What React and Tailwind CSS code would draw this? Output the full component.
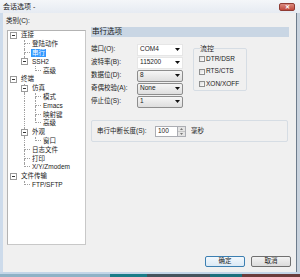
import React from 'react';

const treeRows = [
  { level: 0, label: '连接', open: true },
  { level: 1, label: '登陆动作' },
  { level: 1, label: '串行', selected: true },
  { level: 1, label: 'SSH2', open: true },
  { level: 2, label: '高级' },
  { level: 0, label: '终端', open: true },
  { level: 1, label: '仿真', open: true },
  { level: 2, label: '模式' },
  { level: 2, label: 'Emacs' },
  { level: 2, label: '映射键' },
  { level: 2, label: '高级' },
  { level: 1, label: '外观', open: true },
  { level: 2, label: '窗口' },
  { level: 1, label: '日志文件' },
  { level: 1, label: '打印' },
  { level: 1, label: 'X/Y/Zmodem' },
  { level: 0, label: '文件传输', open: true },
  { level: 1, label: 'FTP/SFTP' },
];

// does the row at index i have a later sibling on the same level?
const hasNextSibling = (i) => {
  const lvl = treeRows[i].level;
  for (let j = i + 1; j < treeRows.length; j++) {
    if (treeRows[j].level < lvl) return false;
    if (treeRows[j].level === lvl) return true;
  }
  return false;
};

// index of the ancestor at a given level
const ancestorAt = (i, lvl) => {
  for (let j = i - 1; j >= 0; j--) {
    if (treeRows[j].level === lvl) return j;
  }
  return -1;
};

const Expander = () => (
  <span className="w-[7px] h-[7px] border border-[#9a9a9a] bg-white flex items-center justify-center shrink-0">
    <span className="w-[3px] h-px bg-[#333]" />
  </span>
);

const TreeRow = ({ row, index }) => {
  const last = !hasNextSibling(index);
  const guides = [];
  for (let k = 1; k < row.level; k++) {
    const a = ancestorAt(index, k);
    guides.push(a >= 0 && hasNextSibling(a));
  }

  return (
    <div className="h-[8.8px] flex items-stretch">
      {row.level > 0 && <div className="w-[11px] shrink-0" />}
      {guides.map((g, k) => (
        <div key={k} className="w-[11px] shrink-0 flex justify-center">
          {g && <div className="w-0 border-l border-dotted border-[#a0a0a0]" />}
        </div>
      ))}
      {row.level === 0 ? (
        <div className="w-[11px] shrink-0 flex items-center justify-center">
          <Expander />
        </div>
      ) : row.open ? (
        <div className="w-[11px] shrink-0 flex flex-col items-center">
          <div className="flex-1 w-0 border-l border-dotted border-[#a0a0a0]" />
          <Expander />
          <div className={`flex-1 w-0 border-l border-dotted ${last ? 'border-transparent' : 'border-[#a0a0a0]'}`} />
        </div>
      ) : (
        <div className="w-[11px] shrink-0 flex flex-col">
          <div className="h-1/2 ml-[5px] border-l border-b border-dotted border-[#a0a0a0]" />
          <div className={`h-1/2 ml-[5px] border-l border-dotted ${last ? 'border-transparent' : 'border-[#a0a0a0]'}`} />
        </div>
      )}
      <div className="flex items-center pl-px">
        <span
          className={`px-px whitespace-nowrap leading-[8px] ${
            row.selected ? 'bg-[#3399ff] text-white' : ''
          }`}
        >
          {row.label}
        </span>
      </div>
    </div>
  );
};

const Arrow = () => (
  <svg width="5" height="3" viewBox="0 0 5 3" className="shrink-0">
    <polygon points="0,0 5,0 2.5,3" fill="#111" />
  </svg>
);

const Combo = ({ value, raised }) => (
  <div
    className={`w-[46px] h-[12px] flex items-center justify-between pl-[2px] pr-[2px] ${
      raised
        ? 'border border-[#8d8d8d] rounded-[2px] bg-gradient-to-b from-[#f6f6f6] to-[#dedede]'
        : 'border border-[#e6e6e6] bg-white'
    }`}
  >
    <span>{value}</span>
    <Arrow />
  </div>
);

const Check = ({ label }) => (
  <div className="h-[8px] flex items-center gap-px">
    <span className="w-[6px] h-[6px] border border-[#8e8f8f] bg-gradient-to-br from-[#dcdcdc] to-white" />
    <span className="whitespace-nowrap">{label}</span>
  </div>
);

const fields = [
  { label: '端口(O):', value: 'COM4' },
  { label: '波特率(B):', value: '115200' },
  { label: '数据位(D):', value: '8', raised: true },
  { label: '奇偶校验(A):', value: 'None', raised: true },
  { label: '停止位(S):', value: '1', raised: true },
];

export default function App() {
  return (
    <div className="w-[300px] h-[277px] flex flex-col overflow-hidden bg-[#dbe5f1] text-[6.5px] leading-none text-[#1b1b1b] font-['Liberation_Sans','Noto_Sans_CJK_SC',sans-serif]">
      {/* title bar */}
      <div className="h-[13px] shrink-0 flex items-center pl-[3px] pr-[5px] bg-gradient-to-b from-[#f4f6f9] to-[#e6ebf2]">
        <span className="text-[7px] text-[#222]">会话选项 -</span>
        <div className="flex-1" />
        <div className="w-[16px] h-[8px] rounded-[2px] border border-[#8f3b33] bg-gradient-to-b from-[#d98a7f] to-[#c0473b] flex items-center justify-center text-white text-[6px] font-bold">
          ✕
        </div>
      </div>

      {/* body */}
      <div className="flex-1 flex min-h-0">
        <div className="w-[3px] bg-[#cddbeb]" />
        <div className="flex-1 flex flex-col bg-[#f0f0f0]">
          <div className="flex-1 flex">
            {/* category tree */}
            <div className="pl-[3px] pt-[4px] flex flex-col">
              <div className="h-[9px] flex items-center">类别(C):</div>
              <div className="mt-[4px] ml-px w-[79px] h-[215px] bg-white border border-[#b3b3b3] border-r-[#c8c8c8] border-b-[#c8c8c8] flex flex-col">
                {treeRows.map((row, i) => (
                  <TreeRow key={i} row={row} index={i} />
                ))}
              </div>
            </div>

            {/* serial options */}
            <div className="ml-[5px] pt-[14px] w-[198px] flex flex-col">
              <div className="h-[10px] bg-[#c9d6e4] flex items-center pl-px text-[7.5px]">串行选项</div>

              <div className="mt-[6px] flex">
                <div className="flex flex-col">
                  {fields.map((f) => (
                    <div key={f.label} className="h-[13px] flex items-center">
                      <span className="w-[46px] whitespace-nowrap">{f.label}</span>
                      <Combo value={f.value} raised={f.raised} />
                    </div>
                  ))}
                </div>

                <fieldset className="ml-[10px] mt-[2px] w-[54px] h-[46px] border border-[#d6dde4] rounded-[2px] px-[5px] flex flex-col">
                  <legend className="ml-[1px] text-[7px] leading-[7px]">流控</legend>
                  <div className="mt-[3px] flex flex-col gap-[4.5px]">
                    <Check label="DTR/DSR" />
                    <Check label="RTS/CTS" />
                    <Check label="XON/XOFF" />
                  </div>
                </fieldset>
              </div>

              <div className="mt-[12px] w-[197px] h-[22px] border border-[#d6dde4] rounded-[2px] flex items-center pl-[5px]">
                <span className="w-[58px] whitespace-nowrap">串行中断长度(S):</span>
                <div className="w-[23px] h-[11px] bg-white border border-[#abadb3] flex items-center pl-[2px]">100</div>
                <div className="w-[8px] h-[11px] flex flex-col border border-l-0 border-[#abadb3]">
                  <div className="flex-1 bg-[#e4e4e4] flex items-center justify-center border-b border-[#c4c4c4]">
                    <svg width="3" height="2" viewBox="0 0 3 2"><polygon points="0,2 3,2 1.5,0" fill="#777" /></svg>
                  </div>
                  <div className="flex-1 bg-[#e4e4e4] flex items-center justify-center">
                    <svg width="3" height="2" viewBox="0 0 3 2"><polygon points="0,0 3,0 1.5,2" fill="#777" /></svg>
                  </div>
                </div>
                <span className="ml-[5px]">毫秒</span>
              </div>
            </div>
          </div>

          {/* dialog buttons */}
          <div className="flex justify-end gap-[6px] pr-[5px] pb-[5px]">
            <button className="w-[40px] h-[11px] rounded-[2px] border border-[#3c7fb1] bg-gradient-to-b from-[#f2f8fd] to-[#dbe9f5] flex items-center justify-center text-[6.5px] leading-none">
              确定
            </button>
            <button className="w-[40px] h-[11px] rounded-[2px] border border-[#707070] bg-gradient-to-b from-[#f3f3f3] to-[#dcdcdc] flex items-center justify-center text-[6.5px] leading-none">
              取消
            </button>
          </div>
        </div>
        <div className="w-px bg-[#6d7c8c]" />
        <div className="w-[3px] bg-[#c9d3de]" />
      </div>

      {/* bottom frame + taskbar sliver */}
      <div className="h-[2px] shrink-0 bg-[#c4d6e8]" />
      <div className="h-[3px] shrink-0 flex">
        <div className="w-[110px] bg-[#8fb2c6]" />
        <div className="w-[37px] bg-[#1b7c88]" />
        <div className="w-[63px] bg-[#45545e]" />
        <div className="w-[32px] bg-[#1d6f7c]" />
        <div className="flex-1 bg-[#6a3c3c]" />
      </div>
    </div>
  );
}
